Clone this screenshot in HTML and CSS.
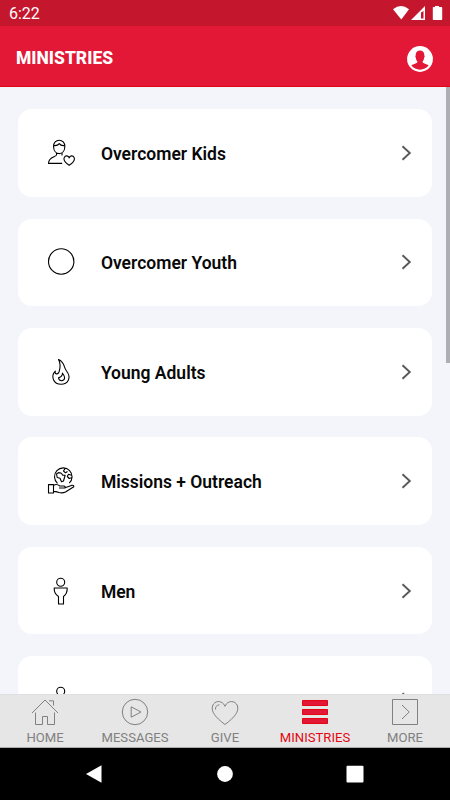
FILE: index.html
```html
<!DOCTYPE html>
<html lang="en">
<head>
<meta charset="utf-8">
<title>Ministries</title>
<link rel="stylesheet" href="styles.css">
</head>
<body>
<div class="phone">
  <div class="status">
    <span class="clock">6:22</span>
    <svg class="signals" width="50" height="16" viewBox="0 0 50 16">
      <path d="M0 3.2Q8-3 16 3.2L8.300 13.600Z"/>
      <path fill-rule="evenodd" d="M32 0V14H18ZM28 6.500V12.500H30.500V5Z"/>
      <path d="M42 1V0h4v1h2.500q.7 0 .7.700v11.600q0 .7-.7.700h-8q-.7 0-.7-.7V1.700q0-.7.7-.7Z"/>
    </svg>
  </div>
  <header class="header">
    <h1>MINISTRIES</h1>
    <svg class="profile" width="26" height="26" viewBox="0 0 26 26">
      <circle cx="13" cy="13" r="12.900" fill="#fff"/>
      <path d="M4.400 19.400C6.500 17.600 10 17.600 10.500 15.700Q8.900 14 8.800 11.500C8 10.900 8.400 10 8.700 9.500 8 2.900 18 2.900 17.300 9.500 17.700 10 18 10.900 17.200 11.500Q17 14 15.500 15.700C16 17.600 19.500 17.600 21.600 19.400A10.800 10.800 0 0 1 4.400 19.400Z"/>
    </svg>
  </header>
  <main class="list">
    <div class="card">
      <svg class="icon" viewBox="0 0 28 28"><path d="M6.600 8C6-1 18.400-1 17.800 8 17.400 16.800 7 16.800 6.600 8ZM6.600 6.500Q10.500 7 12.300 4.600 13.800 7 17.800 6.500M9.500 13.800V16C9 18.300 1.500 17.500 1.500 24.400H15.200M15 13.800V16.600M22.200 26.300C17 22.800 16.600 20 17.300 18.500 18.400 16 21.500 16.500 22.200 18.900 22.900 16.500 26 16 27.100 18.500 27.800 20 27.400 22.800 22.200 26.300Z"/></svg>
      <span class="name">Overcomer Kids</span>
      <svg class="chevron" viewBox="0 0 11 16"><path d="M1.500 1.200 8.800 8 1.500 14.800"/></svg>
    </div>
    <div class="card">
      <svg class="icon" viewBox="0 0 28 28"><circle cx="14.200" cy="13.500" r="12.700"/></svg>
      <span class="name">Overcomer Youth</span>
      <svg class="chevron" viewBox="0 0 11 16"><path d="M1.500 1.200 8.800 8 1.500 14.800"/></svg>
    </div>
    <div class="card">
      <svg class="icon" viewBox="0 0 28 28"><path d="M11.500 1.500C18 4 16.500 9.500 19.500 13 25 20 20.500 26.300 14.200 26.300 6.500 26.300 3.200 18.500 8.300 13.200 7.500 16.500 11 17 12.200 13.500 13.500 9 13.500 5 11.500 1.500ZM15.500 15.200C15.500 18.500 13.500 19 11.500 19.800 12 24 18.300 23.500 17.500 19 17.200 17.400 16.500 16.500 15.500 15.200Z"/></svg>
      <span class="name">Young Adults</span>
      <svg class="chevron" viewBox="0 0 11 16"><path d="M1.500 1.200 8.800 8 1.500 14.800"/></svg>
    </div>
    <div class="card">
      <svg class="icon" viewBox="0 0 28 28"><path d="M10.500 16.300A8.800 8.800 0 1 1 22.200 16.200M9.500 7 11.500 5.600 14 6 15.800 8.200 18.200 8.200 17.500 10.500 16.500 14 14.500 14.800 13 11.200 10.200 10.500ZM18 1.600 16.500 4 18.500 5.800 20.500 4.500M24.500 8.200 21.500 7.300 20.300 9.500 22.200 11.500 24.500 10.800M1.500 17.600H6.500V26H1.500ZM6.500 18.600Q9.500 16.300 12.800 19H16.800Q18.600 19.300 18 21H12M18 20.800 24.500 18.400Q27 18 26.800 19.700L18.500 25Q15.500 26.400 12 25.500L9 24.600H6.500"/></svg>
      <span class="name">Missions + Outreach</span>
      <svg class="chevron" viewBox="0 0 11 16"><path d="M1.500 1.200 8.800 8 1.500 14.800"/></svg>
    </div>
    <div class="card">
      <svg class="icon" viewBox="0 0 28 28"><circle cx="13.700" cy="5.300" r="4"/><path d="M7.200 11H20.200C20.400 15.500 19.200 17.500 16.500 19.500V27H11.500V19.500C8.300 17.500 7 15.500 7.200 11Z"/></svg>
      <span class="name">Men</span>
      <svg class="chevron" viewBox="0 0 11 16"><path d="M1.500 1.200 8.800 8 1.500 14.800"/></svg>
    </div>
    <div class="card">
      <svg class="icon" viewBox="0 0 28 28"><circle cx="13.700" cy="5.300" r="4"/><path d="M7.200 11H20.200L22 20H17V27H11V20H5.500Z"/></svg>
      <span class="name"></span>
      <svg class="chevron" viewBox="0 0 11 16"><path d="M1.500 1.200 8.800 8 1.500 14.800"/></svg>
    </div>
    <div class="scrollbar"></div>
  </main>
  <nav class="tabs">
    <div class="tab"><svg viewBox="0 0 28 28"><path d="M1 15 14 2 27 15M4.500 14.500V26.500H11.500V18.500H16.500V26.500H23.500V14.500M18 2.800H22.500V7.500"/></svg><span>HOME</span></div>
    <div class="tab"><svg viewBox="0 0 28 28"><circle cx="14" cy="14" r="12.700"/><path d="M10.200 8.800V19.200L20 14Z"/></svg><span>MESSAGES</span></div>
    <div class="tab"><svg viewBox="0 0 28 28"><path d="M14 26.500C4 19 0 13.500 1.500 8 3.500 2 11.500 2 14 8.300 16.500 2 24.500 2 26.500 8 28 13.500 24 19 14 26.500ZM4.500 11.500Q4.200 7.200 8.500 6.800"/></svg><span>GIVE</span></div>
    <div class="tab active"><svg viewBox="0 0 28 28"><path d="M1.500 2.500h25v5h-25zM1.500 11.500h25v5h-25zM1.500 20.500h25v5h-25z"/></svg><span>MINISTRIES</span></div>
    <div class="tab"><svg viewBox="0 0 28 28"><path d="M1.500 1.500h25v25h-25zM11 7 18.200 14 11 21"/></svg><span>MORE</span></div>
  </nav>
  <div class="system">
    <svg viewBox="0 0 20 20"><path d="M2 10 17.500 1.300V18.700Z"/></svg>
    <svg viewBox="0 0 20 20"><circle cx="10" cy="10" r="7.900"/></svg>
    <svg viewBox="0 0 20 20"><rect x="1.500" y="1.700" width="17" height="16.800" rx="1"/></svg>
  </div>
</div>
</body>
</html>
```
FILE: styles.css
```css
* { box-sizing: border-box; }
body { margin: 0; font-family: Roboto, "Liberation Sans", sans-serif; }
svg { display: block; flex: none; }
.phone { width: 450px; height: 800px; display: flex; flex-direction: column; overflow: hidden; background: #f3f5fa; }
.status { height: 26px; flex: none; display: flex; justify-content: space-between; align-items: center; padding: 1px 7px 0 9px; background: #c4162c; color: #fff; }
.clock { font-size: 16px; line-height: 20px; }
.signals { fill: #fff; margin-top: 1px; }
.header { height: 61px; flex: none; display: flex; justify-content: space-between; align-items: center; padding: 3px 17px 0 16px; background: #e31837; border-bottom: 1px solid #e30613; color: #fff; }
.header h1 { margin: 0; font-size: 17.5px; line-height: 22px; font-weight: 800; }
.profile { fill: #e31837; margin-top: 2px; }
.list { position: relative; height: 607px; flex: none; overflow: hidden; display: flex; flex-direction: column; gap: 21.85px; padding: 22.4px 17.7px 0; }
.card { height: 87.5px; flex: none; display: flex; align-items: center; padding: 0 20px 0 29.3px; border-radius: 14px; background: #fff; }
.icon { width: 28px; height: 28px; fill: none; stroke: #000; stroke-width: 1.100; stroke-linejoin: round; }
.name { flex: 1; margin-left: 25.9px; padding-top: 2px; font-size: 17.5px; line-height: 22px; font-weight: 600; color: #080808; }
.chevron { width: 11px; height: 16px; fill: none; stroke: #58585a; stroke-width: 1.900; }
.scrollbar { position: absolute; top: 0; right: 0; width: 4.400px; height: 276px; background: #aeafb2; }
.tabs { height: 54px; flex: none; display: flex; background: #e6e6e6; border-top: 1px solid #dedfe1; border-bottom: 1px solid #aaa; }
.tab { width: 90px; display: flex; flex-direction: column; align-items: center; padding-top: 2.500px; color: #808080; font-size: 13.100px; line-height: 18px; }
.tab svg { width: 28px; height: 28px; fill: none; stroke: #808080; stroke-width: 1; }
.tab span { margin-top: 3px; }
.tab.active { color: #e30613; }
.tab.active svg { fill: #e31837; stroke: #e30613; }
.system { flex: 1; display: flex; justify-content: space-between; padding: 16px 85px 0 84px; background: #000; }
.system svg { width: 20px; height: 20px; fill: #fff; }
```
